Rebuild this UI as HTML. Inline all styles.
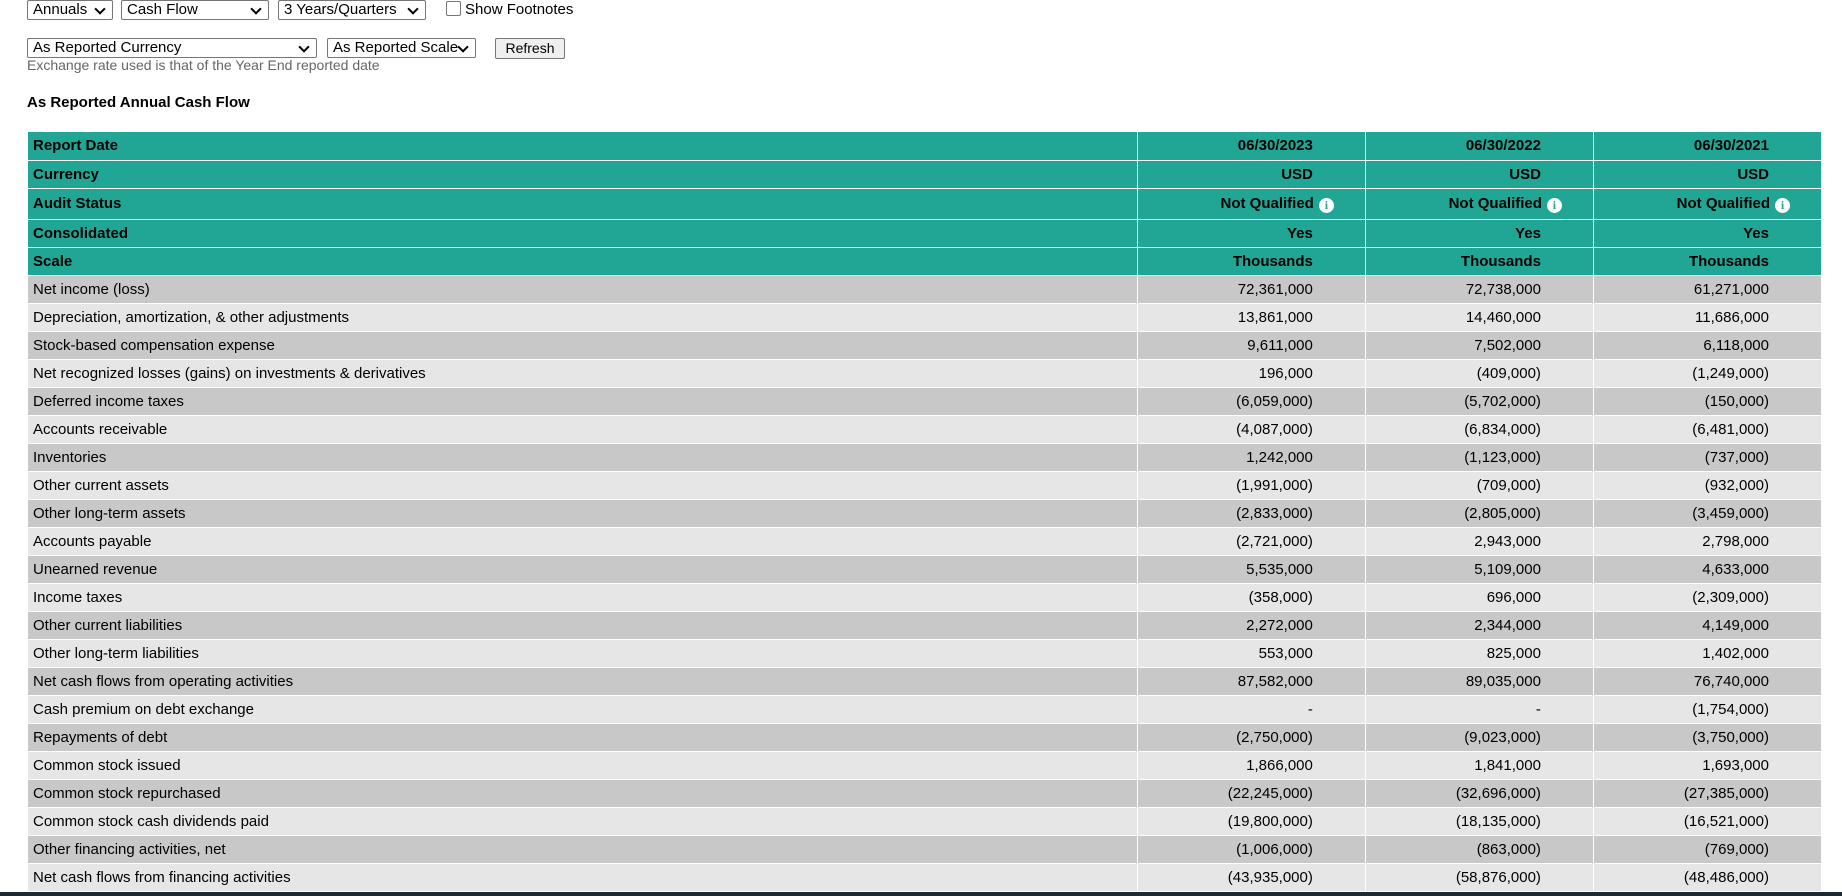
<!DOCTYPE html>
<html><head><meta charset="utf-8"><style>
body{margin:0;width:1842px;height:896px;overflow:hidden;background:#fff;font-family:"Liberation Sans",Arial,sans-serif;position:relative}
.sel{position:absolute;height:20px;border:1px solid #767676;border-radius:2px;box-sizing:border-box;font-size:15px;line-height:18px;padding-left:5px;background:#fff;color:#000}
.sel:after{content:"";position:absolute;right:8px;top:4px;width:6px;height:6px;border-right:2px solid #000;border-bottom:2px solid #000;transform:rotate(45deg)}
.ab{position:absolute}
table{position:absolute;left:28px;top:132px;width:1794px;border-collapse:collapse;font-size:15px}
td{height:28px;padding:0;border-right:1px solid #fff;border-bottom:1px solid #fff;box-sizing:border-box}
td:first-child{padding-left:5px;width:1109px}
td.v{text-align:right;padding-right:52px;width:228px}
tr.h td{background:#21a696;font-weight:bold;color:#000}
tr.d td{background:#c8c8c8}
tr.l td{background:#e6e6e6}
.i{display:inline-block;width:15px;height:15px;border-radius:50%;background:#fff;color:#21a696;font-size:12px;line-height:15px;text-align:center;font-weight:bold;font-family:"Liberation Serif",serif;vertical-align:-1px;margin-left:5px}
</style></head><body>
<div class="sel" style="left:27px;top:0;width:86px">Annuals</div>
<div class="sel" style="left:121px;top:0;width:148px">Cash Flow</div>
<div class="sel" style="left:278px;top:0;width:148px">3 Years/Quarters</div>
<div class="ab" style="left:446px;top:1px;width:13px;height:13px;border:1px solid #767676;border-radius:2px"></div>
<div class="ab" style="left:465px;top:1px;font-size:15px">Show Footnotes</div>
<div class="sel" style="left:27px;top:38px;width:290px">As Reported Currency</div>
<div class="sel" style="left:327px;top:38px;width:149px">As Reported Scale</div>
<div class="ab" style="left:495px;top:38px;width:70px;height:21px;border:1px solid #767676;border-radius:2px;background:#efefef;box-sizing:border-box;font-size:14px;text-align:center;line-height:19px">Refresh</div>
<div class="ab" style="left:27px;top:57px;font-size:14px;color:#666">Exchange rate used is that of the Year End reported date</div>
<div class="ab" style="left:27px;top:94px;font-size:15px;font-weight:bold">As Reported Annual Cash Flow</div>
<table>
<tr class="h"><td>Report Date</td><td class="v">06/30/2023</td><td class="v">06/30/2022</td><td class="v">06/30/2021</td></tr>
<tr class="h"><td>Currency</td><td class="v">USD</td><td class="v">USD</td><td class="v">USD</td></tr>
<tr class="h"><td style="height:31px">Audit Status</td><td class="v" style="padding-right:31px">Not Qualified<span class="i">i</span></td><td class="v" style="padding-right:31px">Not Qualified<span class="i">i</span></td><td class="v" style="padding-right:31px">Not Qualified<span class="i">i</span></td></tr>
<tr class="h"><td>Consolidated</td><td class="v">Yes</td><td class="v">Yes</td><td class="v">Yes</td></tr>
<tr class="h"><td>Scale</td><td class="v">Thousands</td><td class="v">Thousands</td><td class="v">Thousands</td></tr>
<tr class="d"><td>Net income (loss)</td><td class="v">72,361,000</td><td class="v">72,738,000</td><td class="v">61,271,000</td></tr>
<tr class="l"><td>Depreciation, amortization, &amp; other adjustments</td><td class="v">13,861,000</td><td class="v">14,460,000</td><td class="v">11,686,000</td></tr>
<tr class="d"><td>Stock-based compensation expense</td><td class="v">9,611,000</td><td class="v">7,502,000</td><td class="v">6,118,000</td></tr>
<tr class="l"><td>Net recognized losses (gains) on investments &amp; derivatives</td><td class="v">196,000</td><td class="v">(409,000)</td><td class="v">(1,249,000)</td></tr>
<tr class="d"><td>Deferred income taxes</td><td class="v">(6,059,000)</td><td class="v">(5,702,000)</td><td class="v">(150,000)</td></tr>
<tr class="l"><td>Accounts receivable</td><td class="v">(4,087,000)</td><td class="v">(6,834,000)</td><td class="v">(6,481,000)</td></tr>
<tr class="d"><td>Inventories</td><td class="v">1,242,000</td><td class="v">(1,123,000)</td><td class="v">(737,000)</td></tr>
<tr class="l"><td>Other current assets</td><td class="v">(1,991,000)</td><td class="v">(709,000)</td><td class="v">(932,000)</td></tr>
<tr class="d"><td>Other long-term assets</td><td class="v">(2,833,000)</td><td class="v">(2,805,000)</td><td class="v">(3,459,000)</td></tr>
<tr class="l"><td>Accounts payable</td><td class="v">(2,721,000)</td><td class="v">2,943,000</td><td class="v">2,798,000</td></tr>
<tr class="d"><td>Unearned revenue</td><td class="v">5,535,000</td><td class="v">5,109,000</td><td class="v">4,633,000</td></tr>
<tr class="l"><td>Income taxes</td><td class="v">(358,000)</td><td class="v">696,000</td><td class="v">(2,309,000)</td></tr>
<tr class="d"><td>Other current liabilities</td><td class="v">2,272,000</td><td class="v">2,344,000</td><td class="v">4,149,000</td></tr>
<tr class="l"><td>Other long-term liabilities</td><td class="v">553,000</td><td class="v">825,000</td><td class="v">1,402,000</td></tr>
<tr class="d"><td>Net cash flows from operating activities</td><td class="v">87,582,000</td><td class="v">89,035,000</td><td class="v">76,740,000</td></tr>
<tr class="l"><td>Cash premium on debt exchange</td><td class="v">-</td><td class="v">-</td><td class="v">(1,754,000)</td></tr>
<tr class="d"><td>Repayments of debt</td><td class="v">(2,750,000)</td><td class="v">(9,023,000)</td><td class="v">(3,750,000)</td></tr>
<tr class="l"><td>Common stock issued</td><td class="v">1,866,000</td><td class="v">1,841,000</td><td class="v">1,693,000</td></tr>
<tr class="d"><td>Common stock repurchased</td><td class="v">(22,245,000)</td><td class="v">(32,696,000)</td><td class="v">(27,385,000)</td></tr>
<tr class="l"><td>Common stock cash dividends paid</td><td class="v">(19,800,000)</td><td class="v">(18,135,000)</td><td class="v">(16,521,000)</td></tr>
<tr class="d"><td>Other financing activities, net</td><td class="v">(1,006,000)</td><td class="v">(863,000)</td><td class="v">(769,000)</td></tr>
<tr class="l"><td>Net cash flows from financing activities</td><td class="v">(43,935,000)</td><td class="v">(58,876,000)</td><td class="v">(48,486,000)</td></tr>
</table>
<div class="ab" style="left:0;top:892px;width:1842px;height:4px;background:#1b2a33"></div>
</body></html>
